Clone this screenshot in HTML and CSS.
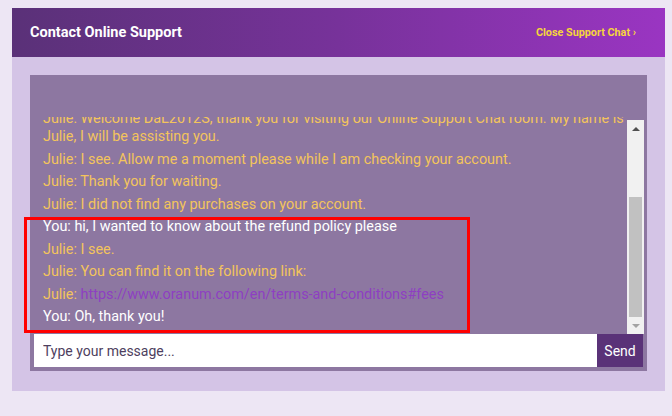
FILE: index.html
```html
<!DOCTYPE html>
<html lang="en">
	<head>
		<meta charset="UTF-8">
		<title>Contact Online Support</title>
		<link rel="stylesheet" href="styles.css">
	</head>
	<body>
		<div class="panel">
			<div class="panel-head">
				<h1>Contact Online Support</h1>
				<a class="close-link" href="#">Close Support Chat &rsaquo;</a>
			</div>
			<div class="panel-body">
				<div class="chat">
					<div class="chat-main">
						<div class="messages">
							<p class="msg julie">Julie: Welcome DaL2012S, thank you for visiting our Online Support Chat room. My name is Julie, I will be assisting you.</p>
							<p class="msg julie">Julie: I see. Allow me a moment please while I am checking your account.</p>
							<p class="msg julie">Julie: Thank you for waiting.</p>
							<p class="msg julie">Julie: I did not find any purchases on your account.</p>
							<p class="msg you">You: hi, I wanted to know about the refund policy please</p>
							<p class="msg julie">Julie: I see.</p>
							<p class="msg julie">Julie: You can find it on the following link:</p>
							<p class="msg julie">Julie: <a href="#">https://www.oranum.com/en/terms-and-conditions#fees</a></p>
							<p class="msg you">You: Oh, thank you!</p>
						</div>
						<div class="scrollbar">
							<span class="sb-btn sb-up"></span>
							<span class="sb-track"><span class="sb-thumb"></span></span>
							<span class="sb-btn sb-down"></span>
						</div>
					</div>
					<form class="composer" onsubmit="return false">
						<input type="text" placeholder="Type your message...">
						<button type="submit">Send</button>
					</form>
				</div>
				<div class="highlight"></div>
			</div>
		</div>
	</body>
</html>
```

FILE: styles.css
```css
* {
	box-sizing: border-box;
}

body {
	margin:      0;
	background:  #ede6f4;
	font-family: Roboto, "Liberation Sans", sans-serif;
}

.panel {
	width:  653px;
	margin: 8px 0 0 12px;
}

.panel-head {
	height:          49px;
	display:         flex;
	align-items:     center;
	justify-content: space-between;
	padding:         0 29px 0 18px;
	background:      linear-gradient(to right, #5a3178, #77329a 50%, #9a35c2);
}

.panel-head h1 {
	margin:      0;
	color:       #fff;
	font-size:   14.5px;
	font-weight: 700;
}

.close-link {
	color:           #f6d53c;
	font-size:       10.8px;
	font-weight:     700;
	text-decoration: none;
}

.panel-body {
	position:   relative;
	padding:    18px 18px 20px;
	background: #d4c4e6;
}

.chat {
	height:     296px;
	padding:    42px 3px 4px 0;
	background: #8d77a1;
}

.chat-main {
	display: flex;
	height:  217px;
}

.messages {
	flex:            1;
	display:         flex;
	flex-direction:  column;
	justify-content: flex-end;
	overflow:        hidden;
	padding:         0 0 8px 13px;
	font-size:       14.4px;
	line-height:     18px;
}

.msg {
	margin: 4.5px 0 0;
}

.julie {
	color: #f3c45c;
}

.you {
	color: #fff;
}

.msg a {
	color:           #8e3fc2;
	text-decoration: none;
}

.scrollbar {
	width:          17px;
	margin-top:     3px;
	display:        flex;
	flex-direction: column;
	background:     #f1f1f1;
}

.sb-btn {
	height:          17px;
	display:         flex;
	align-items:     center;
	justify-content: center;
}

.sb-up::before,
.sb-down::before {
	content:      "";
	width:        0;
	height:       0;
	border-left:  4px solid transparent;
	border-right: 4px solid transparent;
}

.sb-up::before {
	border-bottom: 4px solid #505050;
}

.sb-down::before {
	border-top: 4px solid #a3a3a3;
}

.sb-track {
	flex:            1;
	display:         flex;
	flex-direction:  column;
	justify-content: flex-end;
	padding:         0 2px;
}

.sb-thumb {
	height:     120px;
	background: #c1c1c1;
}

.composer {
	display: flex;
	height:  33px;
	margin:  0 1px 0 4px;
}

.composer input {
	flex:        1;
	border:      0;
	outline:     none;
	padding:     0 9px;
	font-family: inherit;
	font-size:   14px;
	color:       #333;
	background:  #fff;
}

.composer input::placeholder {
	color: #4e3f60;
}

.composer button {
	width:       46px;
	border:      0;
	padding:     0;
	font-family: inherit;
	font-size:   14px;
	color:       #fff;
	background:  #5a3278;
}

/* annotation box drawn over the chat */
.highlight {
	position: absolute;
	left:     12px;
	top:      160px;
	width:    446px;
	height:   116px;
	border:   3px solid #f00;
}
```
